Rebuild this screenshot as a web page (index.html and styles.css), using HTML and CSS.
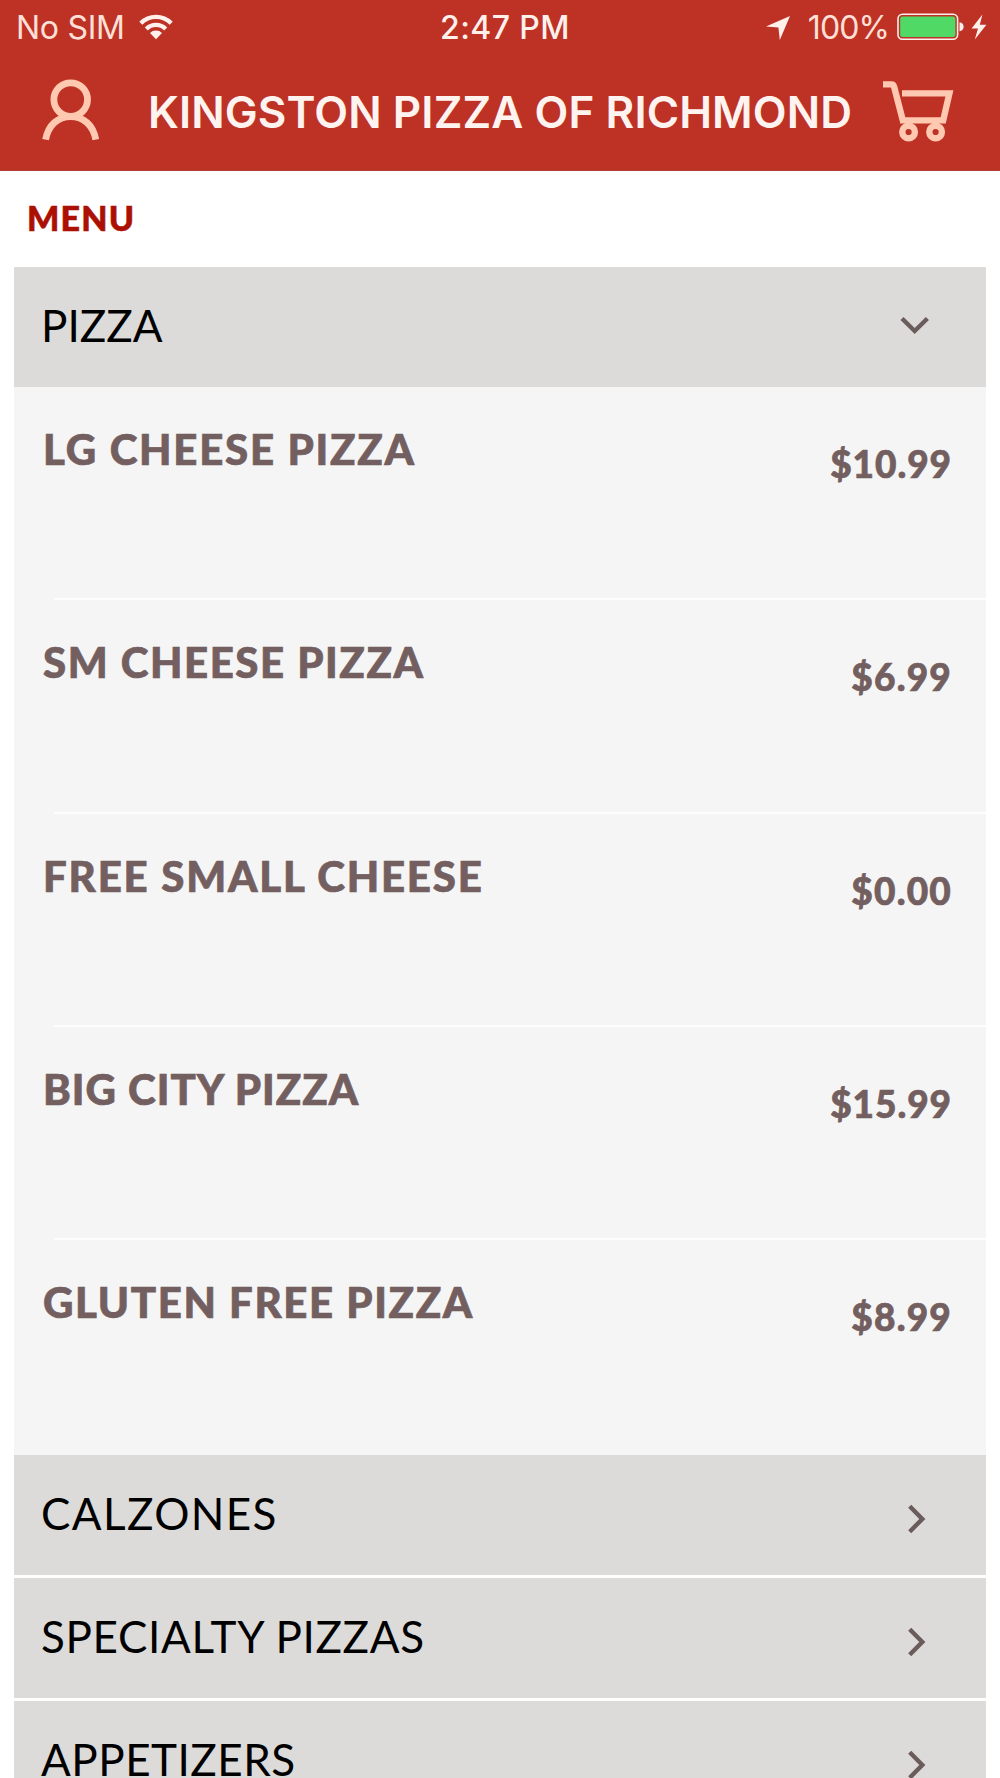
FILE: index.html
```
<!DOCTYPE html>
<html lang="en">
<head>
<meta charset="utf-8">
<title>Kingston Pizza of Richmond</title>
<link rel="stylesheet" href="styles.css">
</head>
<body>
<header class="header">
  <div class="status">
    <div class="status-left">
      <span class="carrier">No SIM</span>
      <svg class="wifi" viewBox="0 0 34 26" width="34" height="26">
        <g fill="none" stroke="currentColor" stroke-width="4.3">
          <path d="M1.8 9.2 A21.5 21.5 0 0 1 32.2 9.2"/>
          <path d="M7.3 14.9 A13.7 13.7 0 0 1 26.7 14.9"/>
        </g>
        <path d="M17 25.2 L11 19.1 A8.5 8.5 0 0 1 23 19.1 Z" fill="currentColor"/>
      </svg>
    </div>
    <span class="clock">2:47 PM</span>
    <div class="status-right">
      <svg class="location" viewBox="0 0 26 26" width="26" height="26"><path d="M25 1 L14.8 25 L13.4 12.6 L1 11.4 Z" fill="currentColor"/></svg>
      <span class="percent">100%</span>
      <svg class="battery" viewBox="0 0 68 28" width="68" height="28">
        <rect x="1" y="1.2" width="59.6" height="25" rx="4.5" fill="none" stroke="currentColor" stroke-width="1.6"/>
        <rect x="3.2" y="3.4" width="55.2" height="20.6" rx="2.5" fill="#50d964"/>
        <path d="M62.5 9.2 Q66.6 9.8 66.6 13.7 Q66.6 17.6 62.5 18.2 Z" fill="currentColor"/>
      </svg>
      <svg class="bolt" viewBox="0 0 16 26" width="16" height="26"><path d="M11.4 0.5 L0.6 14.6 L7 14.6 L3.8 25.5 L15.4 10.8 L8.8 10.8 Z" fill="currentColor"/></svg>
    </div>
  </div>
  <div class="nav">
    <svg class="nav-icon" viewBox="0 0 60 66" width="60" height="66" fill="none" stroke="currentColor" stroke-width="6.8">
      <circle cx="30.7" cy="22.6" r="16.8"/>
      <path d="M5.6 62.6 C8.2 48 18 39.6 30.7 39.6 C43.4 39.6 53.2 48 55.8 62.6"/>
    </svg>
    <h1 class="title">KINGSTON PIZZA OF RICHMOND</h1>
    <svg class="nav-icon" viewBox="0 0 72 66" width="72" height="66" fill="none" stroke="currentColor" stroke-width="6.4">
      <path stroke-linejoin="bevel" d="M1 7.4 H9.6 Q11.4 7.4 12 9.4 L20.8 43.4"/>
      <path d="M18 43.4 H61.2 L67.4 16.4 H20"/>
      <circle cx="26.6" cy="55" r="6.3"/>
      <circle cx="53.6" cy="55" r="6.3"/>
    </svg>
  </div>
</header>
<main class="menu">
  <h2 class="menu-title">MENU</h2>
  <section class="category">
    <div class="category-bar open">
      <span class="pizza">PIZZA</span>
      <svg class="chevron" viewBox="0 0 30 30" width="30" height="30"><path d="M2 7.5 L14.7 20 L27.4 7.5"/></svg>
    </div>
    <ul class="items">
      <li class="item"><span class="name lg">LG CHEESE PIZZA</span><span class="price long">$10.99</span></li>
      <li class="item"><span class="name sm">SM CHEESE PIZZA</span><span class="price">$6.99</span></li>
      <li class="item"><span class="name free">FREE SMALL CHEESE</span><span class="price">$0.00</span></li>
      <li class="item"><span class="name city">BIG CITY PIZZA</span><span class="price long">$15.99</span></li>
      <li class="item"><span class="name gluten">GLUTEN FREE PIZZA</span><span class="price">$8.99</span></li>
    </ul>
  </section>
  <section class="category">
    <div class="category-bar">
      <span class="calzones">CALZONES</span>
      <svg class="chevron" viewBox="0 0 30 30" width="30" height="30"><path d="M9.7 2.3 L22.3 15 L9.7 27.7"/></svg>
    </div>
  </section>
  <section class="category">
    <div class="category-bar">
      <span class="specialty">SPECIALTY PIZZAS</span>
      <svg class="chevron" viewBox="0 0 30 30" width="30" height="30"><path d="M9.7 2.3 L22.3 15 L9.7 27.7"/></svg>
    </div>
  </section>
  <section class="category">
    <div class="category-bar">
      <span class="appetizers">APPETIZERS</span>
      <svg class="chevron" viewBox="0 0 30 30" width="30" height="30"><path d="M9.7 2.3 L22.3 15 L9.7 27.7"/></svg>
    </div>
  </section>
</main>
</body>
</html>
```
FILE: styles.css
```
* { box-sizing: border-box; }

html, body {
  margin: 0;
  height: 1778px;
  overflow: hidden;
}

body {
  width: 1000px;
  background: #fff;
  font-family: Lato, sans-serif;
}

svg { display: block; flex: none; }

/* Header */
.header {
  height: 171px;
  background: #bd3225;
  border-bottom: 1px solid #b04034;
  color: #fff0ec;
  font-family: Inter, sans-serif;
}

.status {
  display: grid;
  grid-template-columns: 1fr auto 1fr;
  align-items: center;
  height: 54px;
  padding: 0 13px 0 16px;
  font-size: 32px;
  line-height: 52px;
}

.status span { padding-top: 2px; }
.status-left, .status-right { display: flex; align-items: center; }
.status-right { justify-content: flex-end; }
.carrier { letter-spacing: -0.3px; color: #ffe0d8; }
.wifi { margin-left: 14px; }
.clock { font-weight: 500; letter-spacing: 0.4px; margin-left: 7px; }
.location { margin: 2px 17px 0 0; }
.percent { letter-spacing: -0.9px; color: #ffe0d8; }
.battery { margin-left: 8px; }
.bolt { margin-left: 6px; }

.nav {
  display: flex;
  align-items: center;
  justify-content: space-between;
  height: 116px;
  padding: 0 46px 0 40px;
}

.nav-icon { color: #ffc8b0; margin-bottom: 4px; }

.title {
  margin: 0 0 0 18px;
  color: #fff3f0;
  font-size: 44px;
  font-weight: 600;
  line-height: 56px;
  letter-spacing: 0.1px;
}

/* Menu */
.menu {
  display: flex;
  flex-direction: column;
  gap: 3px;
  padding: 0 14px;
}

.menu-title {
  margin: 0 0 -3px;
  height: 96px;
  padding-left: 13px;
  color: #ab1003;
  font-size: 34px;
  font-weight: 900;
  line-height: 94px;
  letter-spacing: 1.2px;
  -webkit-text-stroke: 0.6px #ab1003;
}

.category-bar {
  display: flex;
  align-items: center;
  justify-content: space-between;
  height: 120px;
  padding: 0 56px 0 27px;
  background: #dcdbd9;
  color: #000;
  font-size: 44px;
  line-height: 54px;
}

.category-bar span { padding-bottom: 4px; }
.chevron {
  margin-top: 8px;
  fill: none;
  stroke: #6b5c5c;
  stroke-width: 4.4;
}
.open .chevron { margin: 0 0 2px; }

.pizza { letter-spacing: 0; }
.calzones { letter-spacing: 1.4px; }
.specialty { letter-spacing: 0.65px; }
.appetizers { letter-spacing: 0.5px; }

.items {
  height: 1065px;
  margin: 0;
  padding: 0;
  background: #f5f5f6;
  list-style: none;
  box-shadow: 0 3px 0 #f5f5f6;
}

.item {
  display: flex;
  align-items: flex-start;
  justify-content: space-between;
  height: 213.25px;
  padding: 37px 34px 0 29px;
  color: #735f60;
  font-weight: 900;
  -webkit-text-stroke: 0.7px #735f60;
}

/* Divider is inset on the left, flush on the right */
.item:not(:last-child) {
  background: linear-gradient(#fdfdfd, #fdfdfd) 40px 100% / 100% 2px no-repeat;
}

.name { font-size: 42px; line-height: 50px; }
.lg { letter-spacing: 1.75px; }
.sm { letter-spacing: 1.55px; }
.free { letter-spacing: 1.8px; }
.city { letter-spacing: 1px; }
.gluten { letter-spacing: 1.6px; }

.price {
  padding-top: 18px;
  font-size: 37px;
  line-height: 44px;
  letter-spacing: 1.2px;
}
.long { letter-spacing: 0.95px; }
```
